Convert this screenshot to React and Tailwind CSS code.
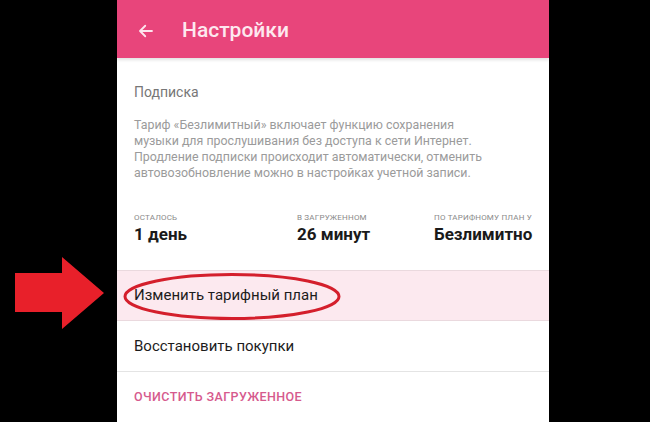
export default function App() {
  const stats = [
    { label: "осталось", value: "1 день" },
    { label: "в загруженном", value: "26 минут" },
    { label: "по тарифному план у", value: "Безлимитно" },
  ];

  return (
    <div
      className="relative flex w-[650px] h-[422px] overflow-hidden bg-black"
      style={{ fontFamily: "Roboto, 'Noto Sans', sans-serif" }}
    >
      {/* pointer arrow */}
      <svg
        className="absolute left-0 top-0"
        width="120"
        height="422"
        viewBox="0 0 120 422"
      >
        <polygon
          points="15,273 62,273 62,257 104,293 62,329 62,312 15,312"
          fill="#e8202a"
        />
      </svg>

      <div className="w-[117px] shrink-0" />

      {/* phone screen */}
      <div className="w-[432px] shrink-0 flex flex-col bg-white">
        <header className="h-[58px] shrink-0 bg-[#e8457b] flex items-center pl-[20px] pt-[3px] shadow-[0_2px_3px_rgba(0,0,0,0.12)] z-10">
          <svg width="18" height="18" viewBox="0 0 24 24" fill="none" stroke="#fde6ee" strokeWidth="2.4" strokeLinecap="round" strokeLinejoin="round">
            <path d="M20 12H5" />
            <path d="M11 5l-7 7 7 7" />
          </svg>
          <h1 className="ml-[27px] text-[21px] font-medium text-[#fde8ef]">Настройки</h1>
        </header>

        <section className="px-[17px] pt-[23px]">
          <h2 className="text-[14px] leading-[22px] text-[#777777]">Подписка</h2>
          <p className="mt-[14px] text-[12.4px] leading-[16px] text-[#9b9b9b]">
            Тариф «Безлимитный» включает функцию сохранения
            <br />
            музыки для прослушивания без доступа к сети Интернет.
            <br />
            Продление подписки происходит автоматически, отменить
            <br />
            автовозобновление можно в настройках учетной записи.
          </p>

          <div className="mt-[32px] grid grid-cols-[163px_137px_1fr] pb-[25px]">
            {stats.map((s) => (
              <div key={s.label}>
                <div className="text-[8px] leading-[10px] uppercase text-[#8a8a8a] tracking-[0.2px]">
                  {s.label}
                </div>
                <div className="mt-0 text-[17px] leading-[22px] font-bold text-[#1a1a1a]">
                  {s.value}
                </div>
              </div>
            ))}
          </div>
        </section>

        <div className="relative h-[51px] shrink-0 flex items-center px-[17px] bg-[#fce9ef] border-y border-[#ead9de]">
          <span className="text-[15px] text-[#1c1c1c]">Изменить тарифный план</span>
          <svg className="absolute left-[4px] top-[1px]" width="222" height="50" viewBox="0 0 222 50">
            <ellipse cx="111" cy="24.5" rx="107" ry="22" fill="none" stroke="#d41f2c" strokeWidth="3" />
          </svg>
        </div>

        <div className="h-[51px] shrink-0 flex items-center px-[17px] border-b border-[#e4e4e4]">
          <span className="text-[15px] text-[#1c1c1c]">Восстановить покупки</span>
        </div>

        <div className="flex-1 flex items-center px-[17px]">
          <span className="text-[12.5px] font-medium uppercase text-[#d65a8d] tracking-[0.4px]">
            Очистить загруженное
          </span>
        </div>
      </div>
    </div>
  );
}
